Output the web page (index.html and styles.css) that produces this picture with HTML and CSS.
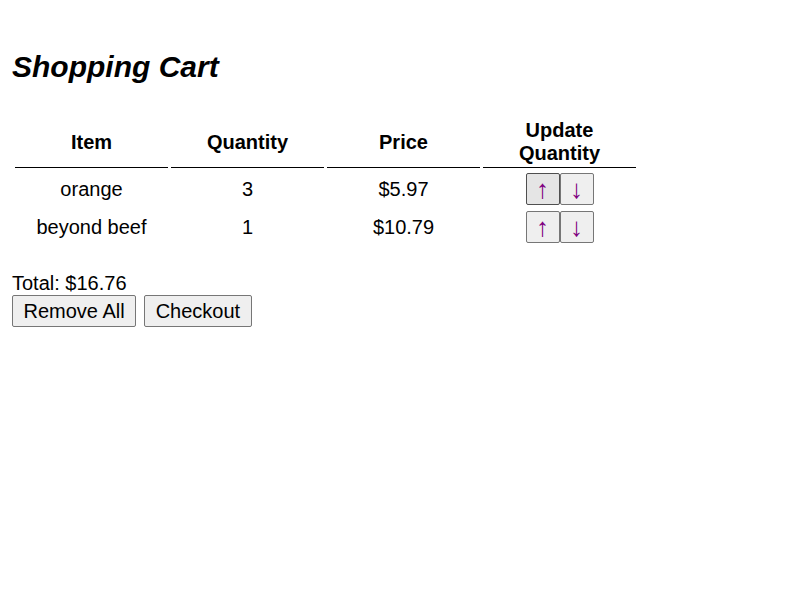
FILE: index.html
```html
<!DOCTYPE html>
<html lang="en">
<head>
<meta charset="utf-8">
<title>Shopping Cart</title>
<link rel="stylesheet" href="styles.css">
</head>
<body>
<div class="page">
  <h2 class="title">Shopping Cart</h2>
  <table class="cart">
    <thead>
      <tr>
        <th>Item</th>
        <th>Quantity</th>
        <th>Price</th>
        <th>Update Quantity</th>
      </tr>
    </thead>
    <tbody>
      <tr>
        <td>orange</td>
        <td>3</td>
        <td>$5.97</td>
        <td class="update"><span class="arrows"><button class="arrow hover">↑</button><button class="arrow">↓</button></span></td>
      </tr>
      <tr>
        <td>beyond beef</td>
        <td>1</td>
        <td>$10.79</td>
        <td class="update"><span class="arrows"><button class="arrow">↑</button><button class="arrow">↓</button></span></td>
      </tr>
    </tbody>
  </table>
  <div class="total">Total: $16.76</div>
  <div class="actions">
    <button class="btn">Remove All</button>
    <button class="btn">Checkout</button>
  </div>
</div>
</body>
</html>
```

FILE: styles.css
```css
html, body {
  margin: 0;
  padding: 0;
  background: #ffffff;
}

body {
  font-family: "Liberation Sans", Arial, sans-serif;
  font-size: 20px;
  color: #000000;
}

.page {
  padding: 50px 12px 12px 12px;
}

.title {
  margin: 0;
  font-size: 30px;
  font-weight: bold;
  font-style: italic;
  line-height: 34px;
}

.cart {
  margin-top: 32px;
  border-collapse: separate;
  border-spacing: 3px;
  table-layout: fixed;
  width: 627px;
}

.cart th,
.cart td {
  width: 151px;
  text-align: center;
  font-size: 20px;
  line-height: 23px;
}

.cart th {
  padding: 0 1px 2px 1px;
  font-weight: bold;
  border-bottom: 1px solid #000000;
  vertical-align: middle;
}

.cart td {
  padding: 2px 1px 0 1px;
  vertical-align: middle;
  height: 32px;
}

.cart td.update {
  padding: 2px 1px 1px 1px;
  vertical-align: top;
}

.arrows {
  display: inline-flex;
}

button {
  font-family: "Liberation Sans", Arial, sans-serif;
  font-size: 20px;
  line-height: 23px;
  background: #efefef;
  border: 1px solid #767676;
  border-radius: 2px;
  color: #000000;
  margin: 0;
}

.arrow {
  width: 34px;
  height: 32px;
  padding: 0;
  font-size: 26px;
  line-height: 30px;
  color: #800080;
}

.arrow.hover {
  background: #e5e5e5;
  border-color: #4f4f4f;
}

.total {
  margin-top: 25px;
  line-height: 23px;
}

.actions {
  display: flex;
  gap: 8px;
  margin-top: 0;
}

.btn {
  height: 32px;
  padding: 0 10.5px;
}
```
